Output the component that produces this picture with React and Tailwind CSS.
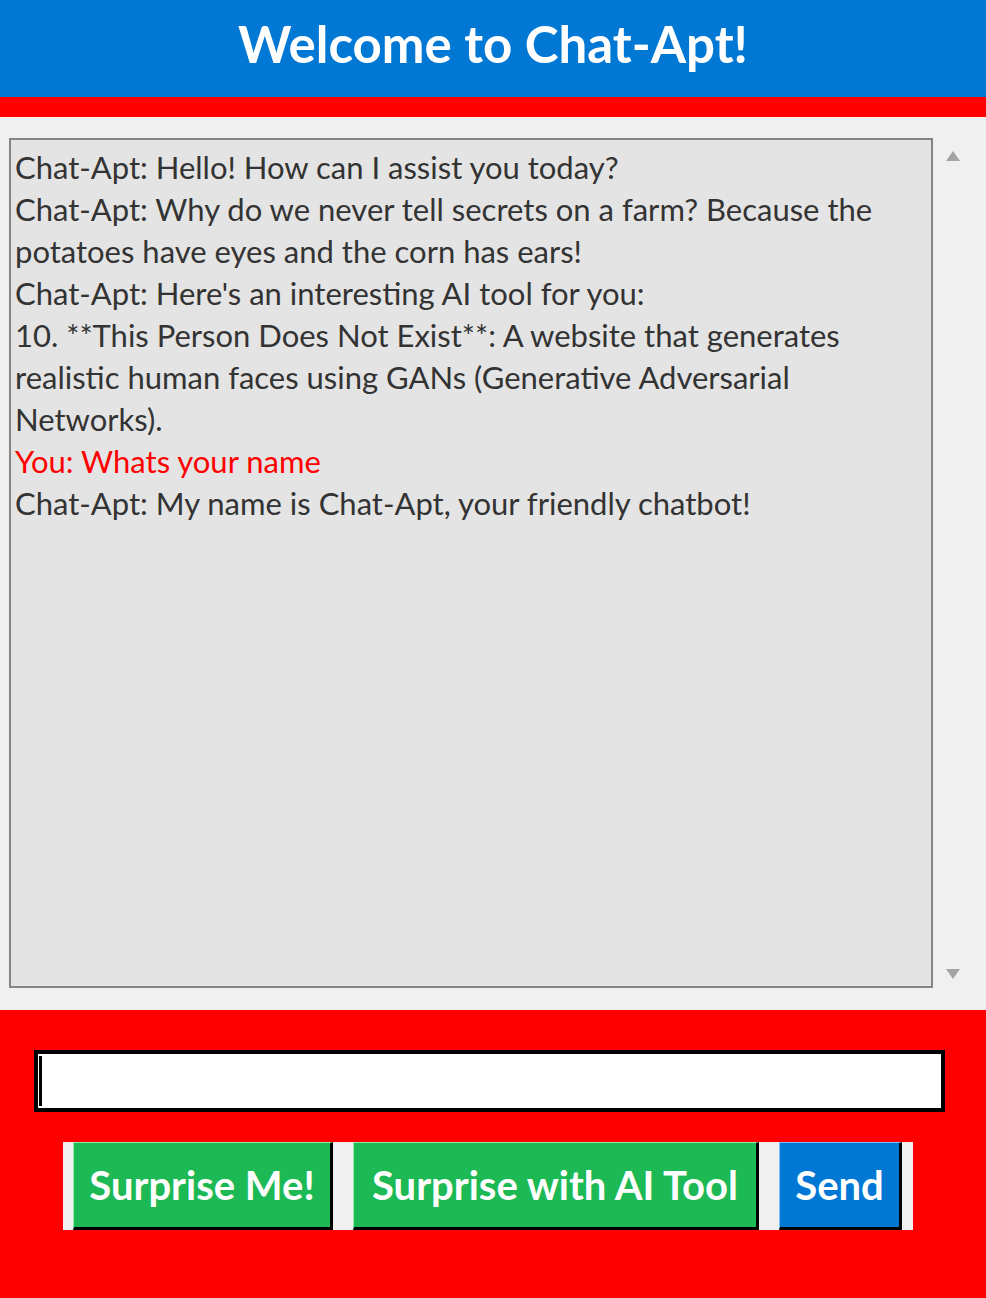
import React from 'react';

const FONT = { fontFamily: 'Lato, "Open Sans", sans-serif' };

const lines = [
  { text: 'Chat-Apt: Hello! How can I assist you today?' },
  { text: 'Chat-Apt: Why do we never tell secrets on a farm? Because the' },
  { text: 'potatoes have eyes and the corn has ears!' },
  { text: "Chat-Apt: Here's an interesting AI tool for you:" },
  { text: '10. **This Person Does Not Exist**: A website that generates' },
  { text: 'realistic human faces using GANs (Generative Adversarial' },
  { text: 'Networks).' },
  { text: 'You: Whats your name', you: true },
  { text: 'Chat-Apt: My name is Chat-Apt, your friendly chatbot!' },
];

function RaisedButton({ children, color, width }) {
  return (
    <button
      className={`h-[88px] ${width} ${color} text-white font-bold text-[40px] border-t border-l border-t-[#8cf0a8] border-l-[#8cf0a8] border-r-[3px] border-b-[3px] border-r-black border-b-black`}
    >
      {children}
    </button>
  );
}

export default function App() {
  return (
    <div className="w-[986px] h-[1298px] bg-[#f0f0f0] flex flex-col" style={FONT}>
      {/* header */}
      <div className="h-[97px] bg-[#0078d4] flex items-center justify-center pb-[10px]">
        <h1 className="text-white font-bold text-[51px] leading-none">Welcome to Chat-Apt!</h1>
      </div>
      <div className="h-[20px] bg-[#ff0000]" />

      {/* chat area */}
      <div className="flex pt-[21px] pb-[22px]">
        <div className="ml-[9px] w-[924px] h-[850px] border-2 border-[#858585] bg-[#e4e4e4] pl-[4px] pt-[6px] overflow-hidden">
          {lines.map((l, i) => (
            <div
              key={i}
              className={`h-[42px] leading-[42px] text-[31px] whitespace-nowrap ${l.you ? 'text-[#ff0000]' : 'text-[#333333]'}`}
            >
              {l.text}
            </div>
          ))}
        </div>
        <div className="flex-1 flex flex-col items-start justify-between pt-[12px] pb-[8px] pl-[12px]">
          <svg width="16" height="12" viewBox="0 0 16 12">
            <polygon points="8,1 15,11 1,11" fill="#a3a3a3" />
          </svg>
          <svg width="16" height="12" viewBox="0 0 16 12">
            <polygon points="1,1 15,1 8,11" fill="#a3a3a3" />
          </svg>
        </div>
      </div>

      {/* input + buttons */}
      <div className="flex-1 bg-[#ff0000] pt-[40px]">
        <div className="ml-[34px] w-[911px] h-[62px] border-4 border-black bg-white flex items-center pl-[1px]">
          <div className="w-[3px] h-[50px] bg-black" />
        </div>
        <div className="ml-[63px] mt-[30px] w-[850px] h-[88px] bg-[#f0f0f0] flex items-center pl-[10px] gap-[20px]">
          <RaisedButton color="bg-[#1db954]" width="w-[260px]">Surprise Me!</RaisedButton>
          <RaisedButton color="bg-[#1db954]" width="w-[406px]">Surprise with AI Tool</RaisedButton>
          <button className="h-[88px] w-[123px] bg-[#0078d4] text-white font-bold text-[40px] border-t border-l border-t-[#7fbfff] border-l-[#7fbfff] border-r-[3px] border-b-[3px] border-r-black border-b-black">
            Send
          </button>
        </div>
      </div>
    </div>
  );
}
